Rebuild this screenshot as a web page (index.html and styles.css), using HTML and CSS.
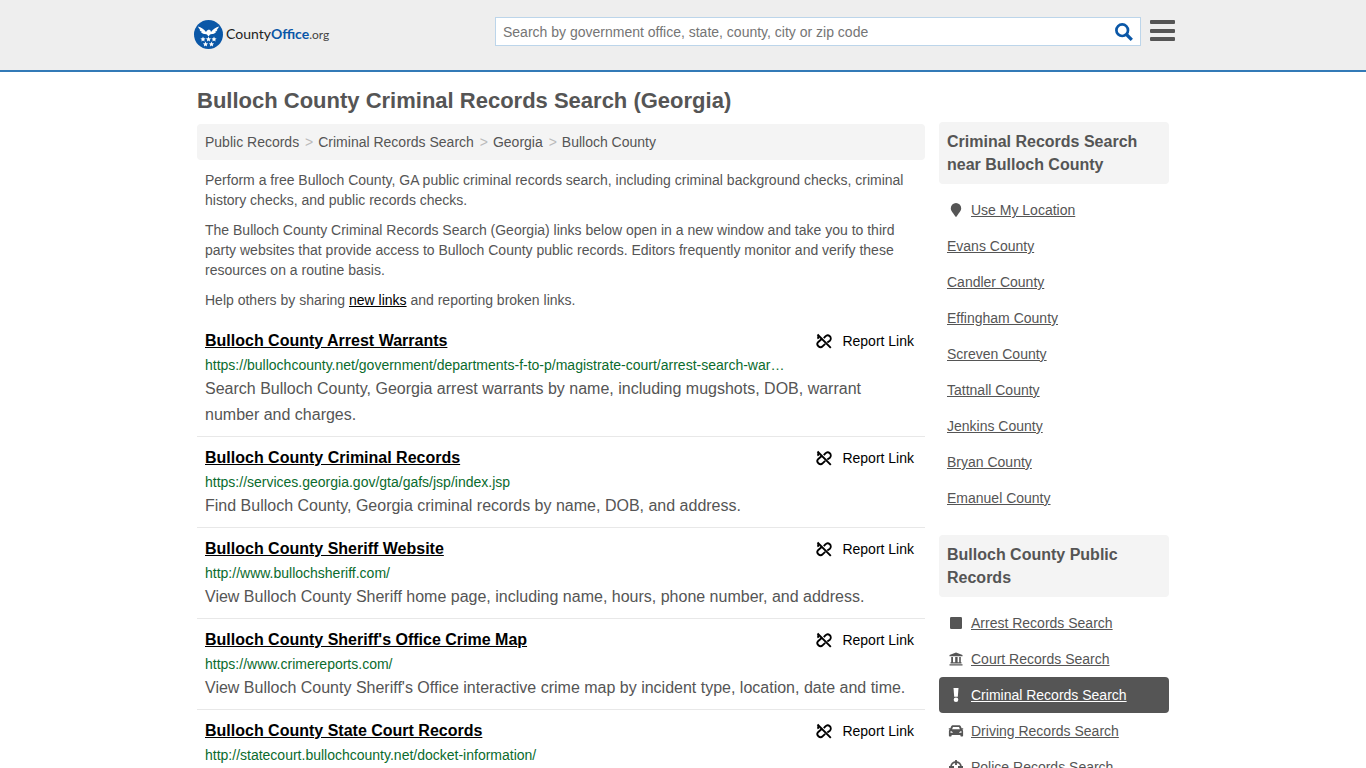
FILE: index.html
```html
<!DOCTYPE html>
<html lang="en">
<head>
    <meta charset="UTF-8">
    <meta name="viewport" content="width=device-width, initial-scale=1.0">
    <title>Bulloch County Criminal Records Search (Georgia)</title>
    <link rel="stylesheet" href="styles.css">
</head>
<body>
    <!-- Shared icons -->
    <svg class="sprite" aria-hidden="true">
        <symbol id="unlink" viewBox="0 0 16 16">
            <g fill="none" stroke="currentColor" stroke-width="1.9">
                <path d="M1.500 1.500L14.800 14.800"/>
                <path d="M7.800 5.200L9.400 3.400A3.100 3.100 0 0 1 13.900 7.700L11.300 9.600"/>
                <path d="M9.200 10.800L6.800 13.200A3.100 3.100 0 0 1 2.300 8.900L6 5.800"/>
                <path d="M2.400 5.800A3 3 0 0 1 2.400 3.200"/>
            </g>
        </symbol>
    </svg>

    <header class="header">
        <div class="header-inner">
            <a class="logo" href="#" aria-label="CountyOffice.org">
                <svg class="logo-mark" viewBox="0 0 58 58" aria-hidden="true">
                    <circle cx="29" cy="29" r="29" fill="#0a57a7"/>
                    <g fill="#fff">
                        <path d="M8 13c6 2 12 5 16 11l2-3 4-2 3 2 1 3c4-6 10-9 16-11-1 3-3 5-5 6l2 0c-1 3-3 4-5 5l2 0c-2 3-5 4-8 4l-4 1-3 4-3-4-4-1c-3 0-6-1-8-4l2 0c-2-1-4-2-5-5l2 0c-2-1-4-3-5-6z"/>
                        <path id="star" d="M18 33l1.500 3.400 3.700.4-2.800 2.500.8 3.700-3.200-1.900-3.200 1.900.8-3.700-2.800-2.500 3.700-.4z"/>
                        <use href="#star" x="11"/>
                        <use href="#star" x="22"/>
                        <use href="#star" x="5" y="10"/>
                        <use href="#star" x="17" y="10"/>
                    </g>
                </svg>
                <span class="logo-text">County<b>Office</b><small>.org</small></span>
            </a>
            <form class="search" role="search">
                <input class="search-input" type="text" aria-label="Search" placeholder="Search by government office, state, county, city or zip code">
                <button class="search-button" type="button" aria-label="Search">
                    <svg viewBox="0 0 18 18" width="18" height="18"><g fill="none" stroke="currentColor"><circle cx="7.2" cy="7.2" r="5.8" stroke-width="2.7"/><path d="M11.5 11.5L16.8 16.8" stroke-width="3.2"/></g></svg>
                </button>
            </form>
            <button class="menu-button" type="button" aria-label="Menu">
                <svg viewBox="0 0 25 22" width="25" height="22" fill="currentColor"><rect width="25" height="4" rx="1"/><rect y="9" width="25" height="4" rx="1"/><rect y="17" width="25" height="4" rx="1"/></svg>
            </button>
        </div>
    </header>

    <div class="container">
        <main class="main">
            <h1>Bulloch County Criminal Records Search (Georgia)</h1>
            <nav class="breadcrumb" aria-label="Breadcrumb">
                <a href="#">Public Records</a>
                <a href="#">Criminal Records Search</a>
                <a href="#">Georgia</a>
                <a href="#">Bulloch County</a>
            </nav>
            <div class="intro">
                <p>Perform a free Bulloch County, GA public criminal records search, including criminal background checks, criminal history checks, and public records checks.</p>
                <p>The Bulloch County Criminal Records Search (Georgia) links below open in a new window and take you to third party websites that provide access to Bulloch County public records. Editors frequently monitor and verify these resources on a routine basis.</p>
                <p>Help others by sharing <a href="#">new links</a> and reporting broken links.</p>
            </div>

            <article class="record">
                <div class="record-top">
                    <h2><a href="#">Bulloch County Arrest Warrants</a></h2>
                    <button class="report" type="button"><svg><use href="#unlink"/></svg>Report Link</button>
                </div>
                <div class="record-url">https://bullochcounty.net/government/departments-f-to-p/magistrate-court/arrest-search-war…</div>
                <p>Search Bulloch County, Georgia arrest warrants by name, including mugshots, DOB, warrant number and charges.</p>
            </article>
            <article class="record">
                <div class="record-top">
                    <h2><a href="#">Bulloch County Criminal Records</a></h2>
                    <button class="report" type="button"><svg><use href="#unlink"/></svg>Report Link</button>
                </div>
                <div class="record-url">https://services.georgia.gov/gta/gafs/jsp/index.jsp</div>
                <p>Find Bulloch County, Georgia criminal records by name, DOB, and address.</p>
            </article>
            <article class="record">
                <div class="record-top">
                    <h2><a href="#">Bulloch County Sheriff Website</a></h2>
                    <button class="report" type="button"><svg><use href="#unlink"/></svg>Report Link</button>
                </div>
                <div class="record-url">http://www.bullochsheriff.com/</div>
                <p>View Bulloch County Sheriff home page, including name, hours, phone number, and address.</p>
            </article>
            <article class="record">
                <div class="record-top">
                    <h2><a href="#">Bulloch County Sheriff's Office Crime Map</a></h2>
                    <button class="report" type="button"><svg><use href="#unlink"/></svg>Report Link</button>
                </div>
                <div class="record-url">https://www.crimereports.com/</div>
                <p>View Bulloch County Sheriff's Office interactive crime map by incident type, location, date and time.</p>
            </article>
            <article class="record">
                <div class="record-top">
                    <h2><a href="#">Bulloch County State Court Records</a></h2>
                    <button class="report" type="button"><svg><use href="#unlink"/></svg>Report Link</button>
                </div>
                <div class="record-url">http://statecourt.bullochcounty.net/docket-information/</div>
            </article>
        </main>

        <aside class="sidebar">
            <section>
                <h3>Criminal Records Search near Bulloch County</h3>
                <ul>
                    <li>
                        <svg viewBox="0 0 18 18"><path d="M9 2a5.2 5.2 0 0 0-5.2 5.2c0 2.300 1 3 4.600 8.300a.7.7 0 0 0 1.200 0c3.600-5.300 4.600-6 4.600-8.300A5.200 5.200 0 0 0 9 2z"/></svg>
                        <a href="#">Use My Location</a>
                    </li>
                    <li><a href="#">Evans County</a></li>
                    <li><a href="#">Candler County</a></li>
                    <li><a href="#">Effingham County</a></li>
                    <li><a href="#">Screven County</a></li>
                    <li><a href="#">Tattnall County</a></li>
                    <li><a href="#">Jenkins County</a></li>
                    <li><a href="#">Bryan County</a></li>
                    <li><a href="#">Emanuel County</a></li>
                </ul>
            </section>
            <section>
                <h3>Bulloch County Public Records</h3>
                <ul>
                    <li>
                        <svg viewBox="0 0 18 18"><rect x="3" y="3" width="12" height="12" rx="1.300"/></svg>
                        <a href="#">Arrest Records Search</a>
                    </li>
                    <li>
                        <svg viewBox="0 0 18 18"><path d="M9 2.500L2.500 5v1.200h13V5zM4.200 7v5.200h-.7v1.200h11v-1.200h-.7V7h-1.600v5.200h-1.600V7H8.200v5.200H6V7zM2.500 14.200h13v1.300h-13z"/></svg>
                        <a href="#">Court Records Search</a>
                    </li>
                    <li class="active">
                        <svg viewBox="0 0 18 18"><path d="M6.500 2h5l-.7 8.700H7.200z"/><circle cx="9" cy="13.700" r="2.300"/></svg>
                        <a href="#">Criminal Records Search</a>
                    </li>
                    <li>
                        <svg viewBox="0 0 18 18"><path fill-rule="evenodd" d="M6.200 3.200h5.600c1 0 1.700.5 2.100 1.400l.7 1.700h1.200c.7 0 .7 1.300 0 1.300h-.6c.6.400.9 1 .9 1.700v4.500c0 .4-.3.700-.7.700h-1.300c-.4 0-.7-.3-.7-.7v-.9H4.600v.9c0 .4-.3.700-.7.700H2.600c-.4 0-.7-.3-.7-.7V9.300c0-.7.3-1.300.9-1.700h-.6c-.7 0-.7-1.300 0-1.300h1.200l.7-1.700c.4-.9 1.100-1.400 2.100-1.400zM6.300 5c-.3 0-.4.200-.5.400L5.100 7.300h7.800l-.7-1.900c-.1-.2-.2-.4-.5-.4zM3.500 9.200v1.600h2.400c0-.9-1.200-1.600-2.400-1.600zM14.500 9.200v1.600h-2.400c0-.9 1.200-1.600 2.400-1.600z"/></svg>
                        <a href="#">Driving Records Search</a>
                    </li>
                    <li>
                        <svg viewBox="0 0 18 18"><circle cx="9" cy="9" r="5" fill="none" stroke="currentColor" stroke-width="1.800"/><path d="M8.100 2h1.800v5H8.100zM8.100 11h1.800v5H8.100zM2 8.100h5v1.800H2zM11 8.100h5v1.800h-5z"/></svg>
                        <a href="#">Police Records Search</a>
                    </li>
                </ul>
            </section>
        </aside>
    </div>
</body>
</html>
```
FILE: styles.css
```css
* {
    box-sizing: border-box;
}
body {
    margin: 0;
    font-family: "Liberation Sans", Arial, sans-serif;
    font-size: 14px;
    line-height: 20px;
    color: #555;
    background-color: #fff;
}
h1, h2, h3, p, ul {
    margin: 0;
    padding: 0;
}
a {
    color: inherit;
}
button {
    padding: 0;
    border: none;
    background: none;
    font: inherit;
    cursor: pointer;
}
.sprite {
    display: none;
}

/* Header */
.header {
    background-color: #eee;
    border-bottom: 2px solid #337ab7;
}
.header-inner {
    display: flex;
    align-items: flex-start;
    max-width: 984px;
    height: 70px;
    margin: 0 auto;
    padding: 17px 0 0 3px;
}
.logo {
    display: flex;
    align-items: center;
    gap: 3px;
    margin-top: 3px;
    color: #222;
    text-decoration: none;
}
.logo-mark {
    width: 29px;
    height: 29px;
}
.logo-text {
    font-family: Lato, sans-serif;
    font-size: 14px;
}
.logo-text b {
    color: #0a57a7;
}
.logo-text small {
    font-size: 12px;
    color: #444;
}
.search {
    display: flex;
    flex: 0 1 646px;
    height: 29px;
    margin-left: auto;
    background-color: #fff;
    border: 1px solid #bcd5ea;
}
.search-input {
    flex: 1;
    min-width: 0;
    padding: 0 7px;
    border: none;
    background: none;
    font: inherit;
    color: #555;
}
.search-input::placeholder {
    color: #757575;
}
.search-button {
    display: flex;
    align-items: center;
    padding: 0 7px;
    color: #0a57a7;
}
.menu-button {
    margin: 3px 0 0 9px;
    height: 22px;
    color: #555;
}

/* Page columns */
.container {
    display: flex;
    align-items: flex-start;
    gap: 14px;
    max-width: 972px;
    margin: 0 auto;
}
.main {
    flex: 1;
    min-width: 0;
}
.sidebar {
    flex: 0 0 230px;
    padding-top: 50px;
}
h1 {
    padding: 15px 0 9px;
    font-size: 22px;
    line-height: 28px;
}
.breadcrumb {
    padding: 8px;
    background-color: #f4f4f4;
    border-radius: 4px;
}
.breadcrumb a {
    text-decoration: none;
}
.breadcrumb a + a::before {
    content: ">";
    padding-right: 5px;
    padding-left: 2px;
    color: #bbb;
}
.intro {
    padding: 10px 8px 0;
}
.intro p {
    margin-bottom: 10px;
}
.intro a {
    color: #000;
}

/* Record list */
.record {
    padding: 8px;
    border-bottom: 1px solid #e8e8e8;
}
.record-top {
    display: flex;
    justify-content: space-between;
    line-height: 26px;
}
.record h2 {
    font-size: 16px;
}
.record h2 a {
    color: #000;
}
.report {
    display: flex;
    align-items: center;
    gap: 10px;
    margin-right: 3px;
    color: #000;
}
.report svg {
    width: 16px;
    height: 16px;
}
.record-url {
    line-height: 22px;
    color: #0a6b2d;
    overflow-wrap: anywhere;
}
.record p {
    font-size: 16px;
    line-height: 26px;
}

/* Sidebar */
.sidebar h3 {
    margin-bottom: 8px;
    padding: 8px;
    font-size: 16px;
    line-height: 23px;
    background-color: #f4f4f4;
    border-radius: 4px;
}
.sidebar ul {
    margin-bottom: 19px;
    list-style: none;
}
.sidebar li {
    display: flex;
    align-items: center;
    gap: 6px;
    height: 36px;
    padding: 0 8px;
    border-radius: 4px;
}
.sidebar li svg {
    width: 18px;
    height: 18px;
    fill: currentColor;
}
.sidebar .active {
    color: #fff;
    background-color: #555;
}
```
